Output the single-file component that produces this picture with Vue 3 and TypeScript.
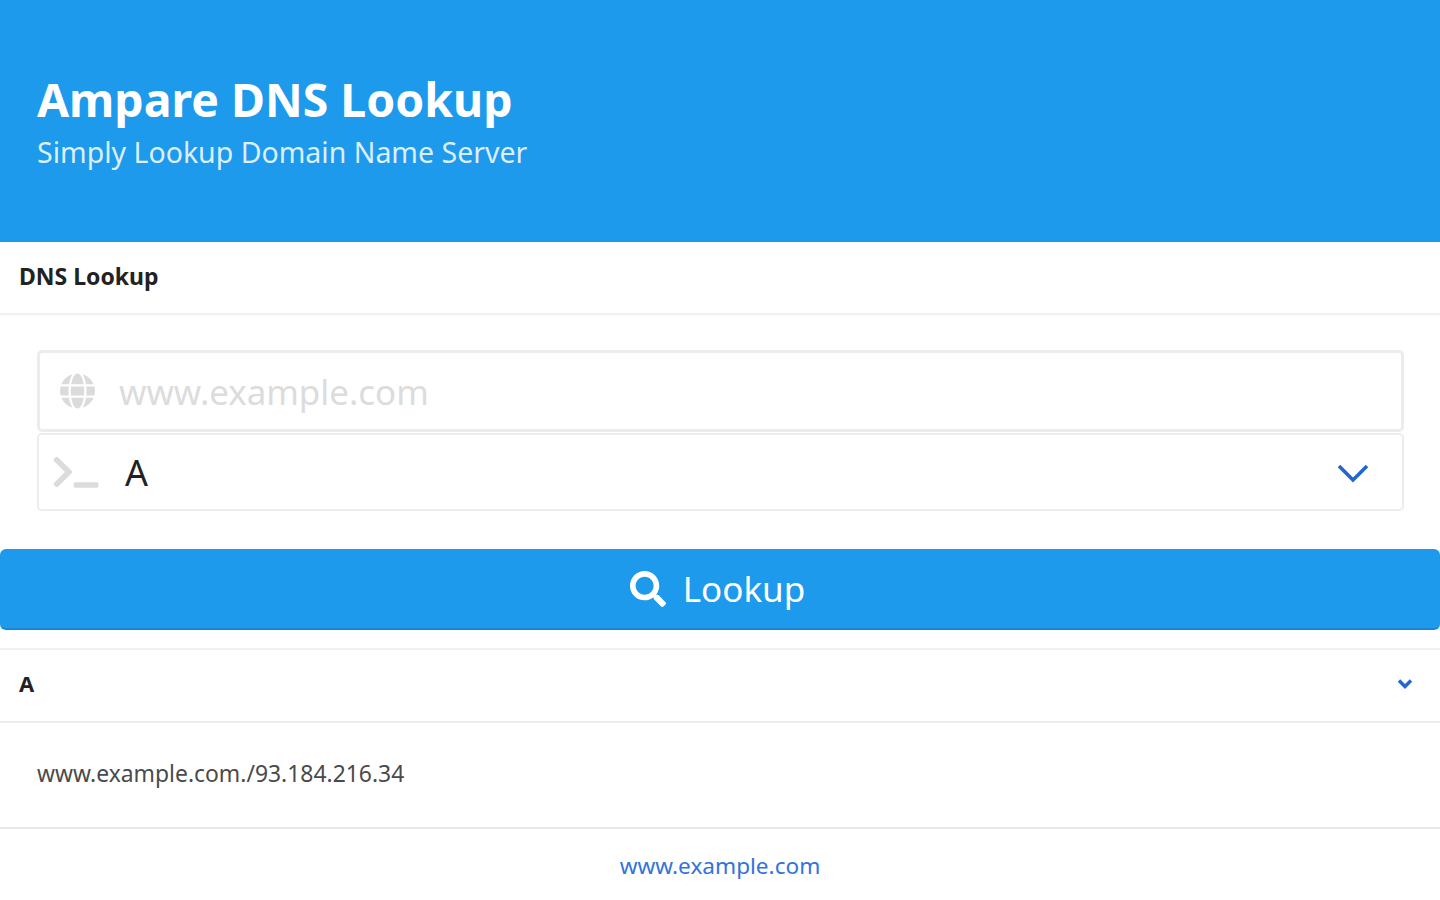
<script setup lang="ts">
const domain = 'www.example.com'
const result = 'www.example.com./93.184.216.34'
</script>

<template>
  <div class="page">
    <section class="hero">
      <h1 class="title">Ampare DNS Lookup</h1>
      <h2 class="subtitle">Simply Lookup Domain Name Server</h2>
    </section>

    <header class="card-head"><span>DNS Lookup</span></header>

    <div class="form">
      <div class="field input-field">
        <svg class="globe" viewBox="0 0 496 512" width="35" height="36" fill="#dbdbdb">
          <path d="M336.5 160C322 70.700 287.800 8 248 8s-74 62.700-88.500 152h177zM152 256c0 22.200 1.200 43.500 3.300 64h185.300c2.100-20.500 3.300-41.800 3.300-64s-1.200-43.500-3.300-64H155.300c-2.100 20.500-3.300 41.800-3.300 64zm324.700-96c-28.600-67.900-86.500-120.400-158-141.600 24.400 33.800 41.200 84.700 50 141.600h108zM177.200 18.400C105.800 39.600 47.800 92.100 19.300 160h108c8.700-56.900 25.500-107.800 49.900-141.600zM487.400 192H372.700c2.100 21 3.300 42.500 3.300 64s-1.200 43-3.300 64h114.600c5.500-20.500 8.600-41.800 8.600-64s-3.100-43.500-8.500-64zM120 256c0-21.500 1.200-43 3.300-64H8.600C3.200 212.500 0 233.800 0 256s3.200 43.500 8.600 64h114.600c-2-21-3.200-42.500-3.200-64zm39.500 96c14.500 89.300 48.700 152 88.500 152s74-62.700 88.500-152h-177zm159.300 141.600c71.400-21.200 129.400-73.700 158-141.600h-108c-8.800 56.900-25.600 107.800-50 141.600zM19.300 352c28.600 67.900 86.500 120.400 158 141.600-24.400-33.800-41.200-84.700-50-141.600h-108z" />
        </svg>
        <span class="placeholder">{{ domain }}</span>
      </div>
      <div class="field select-field">
        <svg class="prompt" viewBox="0 0 640 512" width="46" height="36" fill="#dbdbdb">
          <path d="M257.981 272.971L63.638 467.314c-9.373 9.373-24.569 9.373-33.941 0L7.029 444.647c-9.357-9.357-9.375-24.522-.04-33.901L161.011 256 6.990 101.255c-9.335-9.379-9.317-24.544.04-33.901l22.667-22.667c9.373-9.373 24.569-9.373 33.941 0L257.981 239.030c9.373 9.372 9.373 24.568 0 33.941zM640 456v-32c0-13.255-10.745-24-24-24H312c-13.255 0-24 10.745-24 24v32c0 13.255 10.745 24 24 24h304c13.255 0 24-10.745 24-24z" />
        </svg>
        <span class="select-value">A</span>
        <svg class="chevron" viewBox="0 0 32 20" width="32" height="20" fill="none" stroke="#2366d1" stroke-width="3.600">
          <path d="M2 3l14 14 14-14" />
        </svg>
      </div>
    </div>

    <button class="lookup" type="button">
      <svg viewBox="0 0 512 512" width="36" height="36" fill="#fff">
        <path d="M505 442.700L405.300 343c-4.500-4.500-10.600-7-17-7H372c27.600-35.300 44-79.700 44-128C416 93.100 322.900 0 208 0S0 93.100 0 208s93.100 208 208 208c48.300 0 92.700-16.400 128-44v16.300c0 6.400 2.500 12.500 7 17l99.700 99.700c9.400 9.400 24.600 9.400 33.900 0l28.300-28.300c9.400-9.400 9.400-24.600.1-34zM208 336c-70.700 0-128-57.200-128-128 0-70.700 57.200-128 128-128 70.700 0 128 57.200 128 128 0 70.700-57.200 128-128 128z" />
      </svg>
      <span>Lookup</span>
    </button>

    <header class="result-head">
      <span>A</span>
      <svg class="mini-chevron" viewBox="0 0 16 12" width="16" height="12" fill="none" stroke="#2366d1" stroke-width="3.400">
        <path d="M2 2.500l6 6 6-6" />
      </svg>
    </header>
    <div class="result-body">{{ result }}</div>
    <footer class="result-foot"><a href="#">{{ domain }}</a></footer>
  </div>
</template>

<style>
body { margin: 0; background: #fff; }
</style>

<style scoped>
.page {
  font-family: "Noto Sans", "Open Sans", sans-serif;
  color: #4a4a4a;
  height: 900px;
  overflow: hidden;
}
.hero {
  box-sizing: border-box;
  height: 242px;
  background: #1e9aec;
  padding: 71px 37px 0;
  color: #fff;
}
.title {
  margin: 0;
  font-size: 46.400px;
  line-height: 56px;
  font-weight: 700;
}
.subtitle {
  margin: 5px 0 0;
  font-size: 28.500px;
  line-height: 40px;
  font-weight: 400;
  color: rgba(255, 255, 255, 0.85);
}
.card-head {
  box-sizing: border-box;
  height: 71px;
  display: flex;
  align-items: center;
  padding: 0 19px 3px;
  font-size: 23px;
  font-weight: 700;
  color: #222;
  box-shadow: 0 2px 2px rgba(10, 10, 10, 0.08);
}
.form {
  padding: 37px 36px 38px 37px;
  display: flex;
  flex-direction: column;
  gap: 1px;
}
.field {
  box-sizing: border-box;
  display: flex;
  align-items: center;
  background: #fff;
  border-radius: 5px;
}
.input-field {
  height: 82px;
  border: 3px solid #ececec;
  padding-left: 20px;
}
.globe { flex: none; }
.placeholder {
  margin-left: 24px;
  font-size: 34.900px;
  color: #dcdcdc;
}
.select-field {
  height: 78px;
  border: 2px solid #ececec;
  padding: 0 33px 0 14px;
}
.prompt { flex: none; }
.select-value {
  margin-left: 26px;
  font-size: 36px;
  color: #222;
  flex: 1;
}
.chevron {
  flex: none;
  margin-top: 2px;
}
.lookup {
  box-sizing: border-box;
  width: 100%;
  height: 81px;
  display: flex;
  align-items: center;
  justify-content: center;
  gap: 17px;
  border: 0;
  border-bottom: 2px solid #1489dc;
  border-radius: 6px;
  background: #1e9aec;
  color: #fff;
  font-family: inherit;
  font-size: 35px;
  padding: 0 5px 0 0;
}
.result-head {
  box-sizing: border-box;
  margin-top: 18px;
  height: 75px;
  display: flex;
  align-items: center;
  justify-content: space-between;
  padding: 0 27px 5px 19px;
  font-size: 22px;
  font-weight: 700;
  color: #222;
  border-top: 2px solid #f0f0f0;
  border-bottom: 2px solid #ededed;
}
.mini-chevron { margin-top: 2px; }
.result-body {
  box-sizing: border-box;
  height: 106px;
  display: flex;
  align-items: center;
  padding: 0 37px 3px;
  font-size: 22.900px;
  color: #4a4a4a;
  border-bottom: 2px solid #e8e8e8;
}
.result-foot {
  box-sizing: border-box;
  height: 71px;
  display: flex;
  align-items: center;
  justify-content: center;
  padding-top: 1px;
  font-size: 22.600px;
}
.result-foot a {
  color: #3273dc;
  text-decoration: none;
}
</style>
